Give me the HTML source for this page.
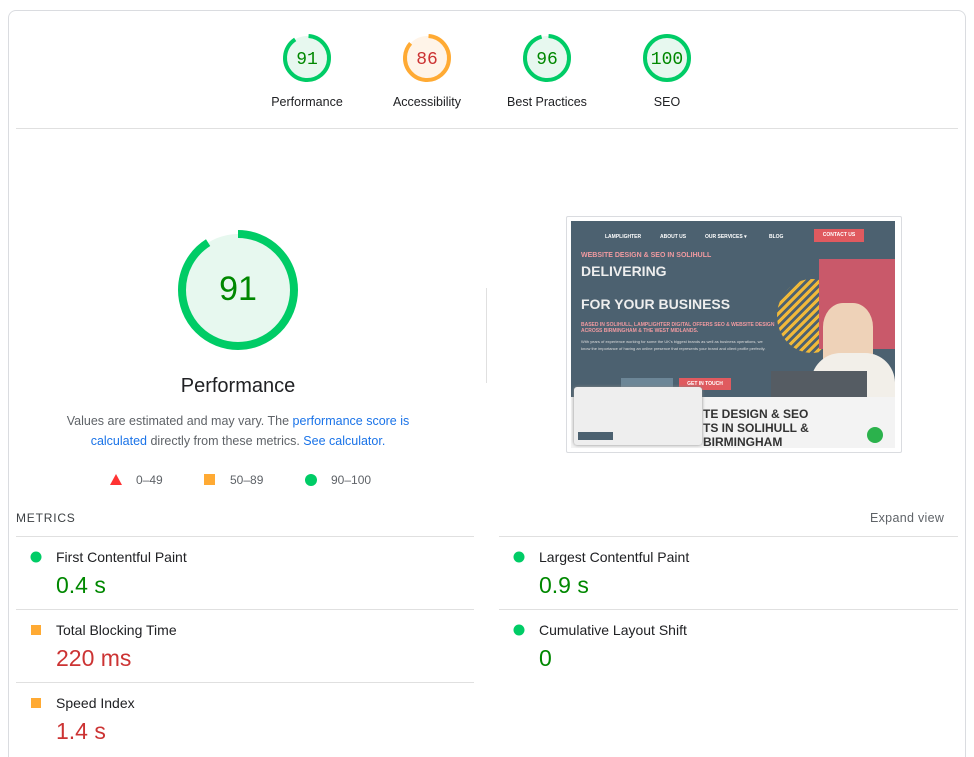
<!DOCTYPE html>
<html><head><meta charset="utf-8"><style>
*{box-sizing:border-box;margin:0;padding:0}
html,body{width:974px;height:757px;overflow:hidden}
body{background:#fff;font-family:"Liberation Sans",sans-serif;color:#202124}
#wrap{position:relative;width:974px;height:757px;overflow:hidden}
.card{position:absolute;left:8px;top:10px;width:958px;height:760px;border:1px solid #dadce0;border-radius:8px}
.abs{position:absolute}
.hr{position:absolute;height:1px;background:#e0e0e0}
.mt{position:absolute;font-size:14px;color:#202124}
.mv{position:absolute;font-size:23px}
.green{color:#080}.red{color:#c33}
</style></head><body><div id="wrap">
<div class="card"></div>
<svg class="abs" style="left:0;top:0" width="974" height="130">
<g font-family="Liberation Mono,monospace" font-size="18" text-anchor="middle">
<circle cx="307" cy="58" r="22" fill="#e7f8ef" stroke="#0c6" stroke-width="4" stroke-dasharray="124 138.2" transform="rotate(-86 307 58)"/>
<text x="307" y="64" fill="#080">91</text>
<circle cx="427" cy="58" r="22" fill="#fff4e8" stroke="#fa3" stroke-width="4" stroke-dasharray="118 138.2" transform="rotate(-86 427 58)"/>
<text x="427" y="64" fill="#c33">86</text>
<circle cx="547" cy="58" r="22" fill="#e7f8ef" stroke="#0c6" stroke-width="4" stroke-dasharray="131 138.2" transform="rotate(-86 547 58)"/>
<text x="547" y="64" fill="#080">96</text>
<circle cx="667" cy="58" r="22" fill="#e7f8ef" stroke="#0c6" stroke-width="4"/>
<text x="667" y="64" fill="#080">100</text>
</g>
<g font-family="Liberation Sans,sans-serif" font-size="12.5" text-anchor="middle" fill="#202124">
<text x="307" y="106">Performance</text><text x="427" y="106">Accessibility</text>
<text x="547" y="106">Best Practices</text><text x="667" y="106">SEO</text></g>
</svg>
<div class="hr" style="left:16px;top:128px;width:942px"></div>
<svg class="abs" style="left:170px;top:222px" width="136" height="136">
<circle cx="68" cy="68" r="56" fill="#e7f8ef" stroke="#0c6" stroke-width="8" stroke-dasharray="320 352" transform="rotate(-90 68 68)"/>
<text x="68" y="78" text-anchor="middle" font-family="Liberation Sans,sans-serif" font-size="34" fill="#080">91</text>
</svg>
<div class="abs" style="left:138px;top:375px;width:200px;text-align:center;font-size:20px">Performance</div>
<div class="abs" style="left:48px;top:412px;width:380px;text-align:center;font-size:12.5px;line-height:19.5px;color:#5f6368">Values are estimated and may vary. The <span style="color:#1a73e8">performance score is calculated</span> directly from these metrics. <span style="color:#1a73e8">See calculator.</span></div>
<svg class="abs" style="left:100px;top:470px" width="300" height="20">
<polygon points="16,4 22,15 10,15" fill="#f33"/>
<rect x="104" y="4" width="11" height="11" fill="#fa3"/>
<circle cx="211" cy="10" r="6" fill="#0c6"/>
<g font-family="Liberation Sans,sans-serif" font-size="12" fill="#5f6368"><text x="36" y="14">0–49</text><text x="130" y="14">50–89</text><text x="231" y="14">90–100</text></g>
</svg>
<div class="abs" style="left:486px;top:288px;width:1px;height:95px;background:#e0e0e0"></div>
<div class="abs" style="left:566px;top:216px;width:336px;height:237px;border:1px solid #dadce0;border-radius:2px;background:#fff">
<div class="abs" style="left:4px;top:4px;width:324px;height:176px;background:#4c6170;overflow:hidden;font-weight:bold;color:#fff">
 <div class="abs" style="left:34px;top:13px;font-size:5px">LAMPLIGHTER</div>
 <div class="abs" style="left:89px;top:13px;font-size:5px">ABOUT US</div>
 <div class="abs" style="left:134px;top:13px;font-size:5px">OUR SERVICES ▾</div>
 <div class="abs" style="left:198px;top:13px;font-size:5px">BLOG</div>
 <div class="abs" style="left:243px;top:8px;width:50px;height:13px;background:#e05a5f;font-size:5px;text-align:center;line-height:13px">CONTACT US</div>
 <div class="abs" style="left:10px;top:31px;font-size:7px;color:#f19aa0">WEBSITE DESIGN &amp; SEO IN SOLIHULL</div>
 <div class="abs" style="left:10px;top:42px;font-size:14px;color:#eee">DELIVERING</div>
 <div class="abs" style="left:10px;top:75px;font-size:14px;color:#eee">FOR YOUR BUSINESS</div>
 <div class="abs" style="left:10px;top:101px;font-size:5px;color:#f19aa0;width:200px">BASED IN SOLIHULL, LAMPLIGHTER DIGITAL OFFERS SEO &amp; WEBSITE DESIGN ACROSS BIRMINGHAM &amp; THE WEST MIDLANDS.</div>
 <div class="abs" style="left:10px;top:117px;font-size:4px;font-weight:normal;color:#ddd;width:185px;line-height:7px">With years of experience working for some the UK's biggest brands as well as business operations, we know the importance of having an online presence that represents your brand and client profile perfectly.</div>
 <div class="abs" style="left:206px;top:58px;width:70px;height:74px;border-radius:50%;background:repeating-linear-gradient(135deg,#f0b93a 0 3px,#4c6170 3px 6px)"></div>
 <div class="abs" style="left:248px;top:38px;width:76px;height:90px;background:#c9596a"></div>
 <div class="abs" style="left:252px;top:82px;width:50px;height:60px;border-radius:40% 40% 0 0;background:#eed2b8"></div>
 <div class="abs" style="left:240px;top:132px;width:84px;height:44px;background:#f2efe9;border-radius:30px 30px 0 0"></div>
 <div class="abs" style="left:200px;top:150px;width:96px;height:26px;background:#555c63"></div>
 <div class="abs" style="left:50px;top:157px;width:52px;height:12px;background:#6c8697"></div>
 <div class="abs" style="left:108px;top:157px;width:52px;height:12px;background:#e05a5f;font-size:5px;text-align:center;line-height:12px">GET IN TOUCH</div>
</div>
<div class="abs" style="left:4px;top:180px;width:324px;height:51px;background:#f3f3f3;font-weight:bold;color:#333;font-size:12px;line-height:14px">
 <div class="abs" style="left:132px;top:10px">TE DESIGN &amp; SEO<br>TS IN SOLIHULL &amp;<br>BIRMINGHAM</div>
 <div class="abs" style="left:296px;top:30px;width:16px;height:16px;border-radius:50%;background:#2bb24c"></div>
</div>
<div class="abs" style="left:7px;top:170px;width:128px;height:58px;background:#eee;border-radius:3px;box-shadow:0 0 3px #888">
 <div class="abs" style="left:4px;top:45px;width:35px;height:8px;background:#4c6170"></div>
</div>
</div>
<div class="abs" style="left:16px;top:511px;font-size:12px;letter-spacing:.8px;color:#3c4043">METRICS</div>
<div class="abs" style="left:870px;top:511px;font-size:12.5px;color:#5f6368;letter-spacing:.3px">Expand view</div>
<div class="hr" style="left:16px;top:536px;width:458px"></div><div class="hr" style="left:499px;top:536px;width:459px"></div>
<div class="hr" style="left:16px;top:609px;width:458px"></div><div class="hr" style="left:499px;top:609px;width:459px"></div>
<div class="hr" style="left:16px;top:682px;width:458px"></div>
<svg class="abs" style="left:0;top:540px" width="974" height="180">
<circle cx="36" cy="17" r="5.5" fill="#0c6"/><circle cx="519" cy="17" r="5.5" fill="#0c6"/>
<rect x="31" y="85" width="10" height="10" fill="#fa3"/><circle cx="519" cy="90" r="5.5" fill="#0c6"/>
<rect x="31" y="158" width="10" height="10" fill="#fa3"/>
</svg>
<div class="mt" style="left:56px;top:549px">First Contentful Paint</div>
<div class="mv green" style="left:56px;top:572px">0.4 s</div>
<div class="mt" style="left:539px;top:549px">Largest Contentful Paint</div>
<div class="mv green" style="left:539px;top:572px">0.9 s</div>
<div class="mt" style="left:56px;top:622px">Total Blocking Time</div>
<div class="mv red" style="left:56px;top:645px">220 ms</div>
<div class="mt" style="left:539px;top:622px">Cumulative Layout Shift</div>
<div class="mv green" style="left:539px;top:645px">0</div>
<div class="mt" style="left:56px;top:695px">Speed Index</div>
<div class="mv red" style="left:56px;top:718px">1.4 s</div>
</div></body></html>
